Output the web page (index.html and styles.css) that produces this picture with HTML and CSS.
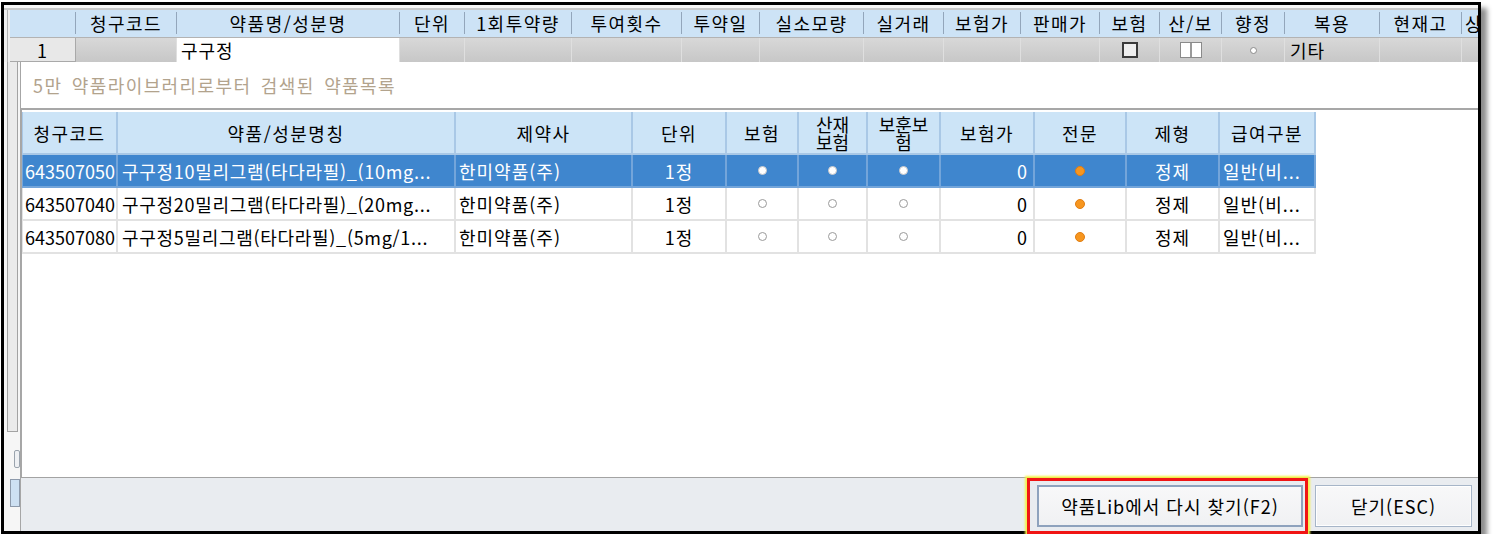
FILE: index.html
```html
<!DOCTYPE html>
<html lang="ko">
<head>
    <meta charset="UTF-8">
    <title>약품라이브러리 검색</title>
    <link rel="stylesheet" href="styles.css">
</head>
<body>
    <div class="window">
        <div class="topline"></div>

        <div class="top-grid">
            <div class="grid-head">
                <div class="gh"></div>
                <div class="gh">청구코드</div>
                <div class="gh">약품명/성분명</div>
                <div class="gh">단위</div>
                <div class="gh">1회투약량</div>
                <div class="gh">투여횟수</div>
                <div class="gh">투약일</div>
                <div class="gh">실소모량</div>
                <div class="gh">실거래</div>
                <div class="gh">보험가</div>
                <div class="gh">판매가</div>
                <div class="gh">보험</div>
                <div class="gh">산/보</div>
                <div class="gh">향정</div>
                <div class="gh">복용</div>
                <div class="gh">현재고</div>
                <div class="gh gh-left">상</div>
            </div>
            <div class="grid-row">
                <div class="gc gc-num">1</div>
                <div class="gc"></div>
                <div class="gc gc-edit">구구정</div>
                <div class="gc"></div>
                <div class="gc"></div>
                <div class="gc"></div>
                <div class="gc"></div>
                <div class="gc"></div>
                <div class="gc"></div>
                <div class="gc"></div>
                <div class="gc"></div>
                <div class="gc gc-mid"><span class="check"></span></div>
                <div class="gc gc-mid"><span class="dbl-box"></span></div>
                <div class="gc gc-mid"><span class="ring"></span></div>
                <div class="gc gc-text">기타</div>
                <div class="gc"></div>
                <div class="gc"></div>
            </div>
        </div>

        <div class="lower">
            <div class="side">
                <div class="side-track"></div>
                <div class="side-knob"></div>
                <div class="side-blue"></div>
            </div>

            <div class="dialog">
                <div class="dialog-title">5만 약품라이브러리로부터 검색된 약품목록</div>

                <div class="result-panel">
                    <div class="rg rg-head">
                        <div class="hc">청구코드</div>
                        <div class="hc">약품/성분명칭</div>
                        <div class="hc">제약사</div>
                        <div class="hc">단위</div>
                        <div class="hc">보험</div>
                        <div class="hc hc-two">산재<br>보험</div>
                        <div class="hc hc-two">보훈보<br>험</div>
                        <div class="hc">보험가</div>
                        <div class="hc">전문</div>
                        <div class="hc">제형</div>
                        <div class="hc">급여구분</div>
                    </div>

                    <div class="rg rg-row selected">
                        <div class="bc code">643507050</div>
                        <div class="bc name">구구정10밀리그램(타다라필)_(10mg...</div>
                        <div class="bc maker">한미약품(주)</div>
                        <div class="bc mid">1정</div>
                        <div class="bc mid"><span class="dot"></span></div>
                        <div class="bc mid"><span class="dot"></span></div>
                        <div class="bc mid"><span class="dot"></span></div>
                        <div class="bc num">0</div>
                        <div class="bc mid"><span class="dot dot-pro"></span></div>
                        <div class="bc mid">정제</div>
                        <div class="bc maker">일반(비...</div>
                    </div>

                    <div class="rg rg-row">
                        <div class="bc code">643507040</div>
                        <div class="bc name">구구정20밀리그램(타다라필)_(20mg...</div>
                        <div class="bc maker">한미약품(주)</div>
                        <div class="bc mid">1정</div>
                        <div class="bc mid"><span class="dot"></span></div>
                        <div class="bc mid"><span class="dot"></span></div>
                        <div class="bc mid"><span class="dot"></span></div>
                        <div class="bc num">0</div>
                        <div class="bc mid"><span class="dot dot-pro"></span></div>
                        <div class="bc mid">정제</div>
                        <div class="bc maker">일반(비...</div>
                    </div>

                    <div class="rg rg-row">
                        <div class="bc code">643507080</div>
                        <div class="bc name">구구정5밀리그램(타다라필)_(5mg/1...</div>
                        <div class="bc maker">한미약품(주)</div>
                        <div class="bc mid">1정</div>
                        <div class="bc mid"><span class="dot"></span></div>
                        <div class="bc mid"><span class="dot"></span></div>
                        <div class="bc mid"><span class="dot"></span></div>
                        <div class="bc num">0</div>
                        <div class="bc mid"><span class="dot dot-pro"></span></div>
                        <div class="bc mid">정제</div>
                        <div class="bc maker">일반(비...</div>
                    </div>
                </div>

                <div class="dialog-foot">
                    <div class="focus-ring">
                        <button class="btn btn-main">약품Lib에서 다시 찾기(F2)</button>
                    </div>
                    <button class="btn btn-close">닫기(ESC)</button>
                </div>
            </div>
        </div>
    </div>
</body>
</html>
```

FILE: styles.css
```css
body {
    margin: 0;
    background: #fff;
    font-family: "Noto Sans CJK KR", "Noto Sans", sans-serif;
    font-size: 18px;
    letter-spacing: 1px;
    color: #000;
}

.window {
    box-sizing: border-box;
    width: 1480px;
    height: 532px;
    margin: 2px 0 0 1px;
    border: 3px solid #000;
    box-shadow: 6px 6px 5px rgba(0, 0, 0, 0.45);
    background: #f0f0f0;
    display: flex;
    flex-direction: column;
}

.topline {
    flex: none;
    height: 3px;
    background: #f7f7f7;
    border-bottom: 2px solid #c9c9c9;
}

/* underlying prescription grid */
.top-grid {
    flex: none;
    overflow: hidden;
    border-left: 1px solid #b4b4b4;
    margin-left: 3px;
    padding-left: 2px;
}

.grid-head,
.grid-row {
    display: grid;
    grid-template-columns: 66px 101px 223px 65px 107px 110px 78px 104px 80px 77px 79px 60px 62px 63px 95px 82px 40px;
}

.grid-head {
    height: 27px;
    background: #cde3f6;
    letter-spacing: 1.5px;
}

.gh {
    box-sizing: border-box;
    margin: 2px 0 3px;
    border-right: 1px solid #93a6bb;
    display: flex;
    align-items: center;
    justify-content: center;
    line-height: 20px;
    white-space: nowrap;
}

.gh-left {
    justify-content: flex-start;
    padding-left: 3px;
    border-right: none;
}

.grid-row {
    height: 25px;
    background: linear-gradient(#d8d8d8, #c7c7c7);
    border-top: 1px solid #b3b3b3;
    box-sizing: border-box;
}

.gc {
    box-sizing: border-box;
    border-right: 1px solid #dfdfdf;
    display: flex;
    align-items: center;
    line-height: 20px;
}

.gc-num {
    justify-content: center;
    background: #e8e8e8;
    border-right: 1px solid #a9a9a9;
    border-bottom: 1px solid #a9a9a9;
}

.gc-edit {
    background: #fff;
    padding-left: 4px;
}

.gc-mid {
    justify-content: center;
}

.gc-text {
    padding-left: 5px;
}

.check {
    box-sizing: border-box;
    width: 16px;
    height: 16px;
    border: 2px solid #3b3b3b;
    background: #efefef;
}

.dbl-box {
    box-sizing: border-box;
    width: 22px;
    height: 16px;
    border: 1px solid #8a8a8a;
    background: linear-gradient(90deg, #fff 0 9px, #9a9a9a 9px 11px, #fff 11px);
}

.ring {
    box-sizing: border-box;
    width: 7px;
    height: 7px;
    border: 1px solid #8a8a8a;
    border-radius: 50%;
    background: #fff;
}

/* dialog */
.lower {
    flex: 1;
    display: flex;
    min-height: 0;
}

.side {
    flex: none;
    width: 16px;
    background: #f6f6f6;
    display: flex;
    flex-direction: column;
}

.side-track {
    height: 370px;
    margin-left: 3px;
    width: 11px;
    box-sizing: border-box;
    background: #ebebeb;
    border-left: 1px solid #a3a3a3;
    border-right: 1px solid #a3a3a3;
    border-bottom: 1px solid #a3a3a3;
}

.side-knob {
    margin: 18px 0 0 10px;
    width: 6px;
    height: 18px;
    box-sizing: border-box;
    border: 1px solid #9aa3ad;
    border-radius: 2px;
    background: #eef0f3;
}

.side-blue {
    margin: 11px 0 0 6px;
    width: 10px;
    height: 28px;
    box-sizing: border-box;
    border: 1px solid #8d9aab;
    background: #cde0f2;
}

.dialog {
    flex: 1;
    display: flex;
    flex-direction: column;
    background: #fff;
    border-left: 1px solid #a6a6a6;
}

.dialog-title {
    flex: none;
    height: 46px;
    line-height: 46px;
    padding-left: 12px;
    color: #b2a38d;
    letter-spacing: 1.4px;
    word-spacing: 3px;
}

.result-panel {
    flex: 1;
    border-top: 2px solid #a7a7a7;
    border-left: 1px solid #a7a7a7;
    padding-top: 2px;
    background: #fff;
}

.rg {
    display: grid;
    grid-template-columns: 96px 338px 177px 94px 72px 69px 73px 94px 92px 93px 96px;
    width: max-content;
}

.rg-head {
    height: 43px;
    background: #cce4f7;
}

.hc {
    box-sizing: border-box;
    border-right: 2px solid #a9c8e6;
    border-bottom: 2px solid #a9c8e6;
    display: flex;
    align-items: center;
    justify-content: center;
    text-align: center;
    line-height: 20px;
    letter-spacing: 1.5px;
}

.hc:first-child,
.bc:first-child {
    border-left: 1px solid #a9c8e6;
}

.hc-two {
    line-height: 18px;
    letter-spacing: 0;
}

.rg-row {
    height: 33px;
}

.bc {
    box-sizing: border-box;
    border-right: 2px solid #e2e2e2;
    border-bottom: 2px solid #e2e2e2;
    display: flex;
    align-items: center;
    line-height: 20px;
    white-space: nowrap;
    overflow: hidden;
}

.bc:first-child {
    border-left-color: #e2e2e2;
}

.code {
    padding-left: 2px;
    letter-spacing: 0;
}

.name {
    padding-left: 4px;
    letter-spacing: 0.7px;
}

.maker {
    padding-left: 3px;
}

.mid {
    justify-content: center;
}

.num {
    justify-content: flex-end;
    padding-right: 5px;
}

.selected {
    background: #3f86ce;
    color: #fff;
}

.selected .bc {
    border-color: #73a5da;
}

.dot {
    box-sizing: border-box;
    width: 9px;
    height: 9px;
    border-radius: 50%;
    border: 1px solid #9a9a9a;
    background: #fff;
}

.selected .dot {
    border-color: #c9c9c9;
    background: #fff;
}

.dot-pro,
.selected .dot-pro {
    width: 10px;
    height: 10px;
    border-color: #e07d12;
    background: #f7961f;
}

.dialog-foot {
    flex: none;
    height: 54px;
    box-sizing: border-box;
    border-top: 1px solid #a3a3a3;
    background: #e9ecf0;
    display: flex;
    justify-content: flex-end;
    align-items: flex-start;
    padding-right: 6px;
}

.focus-ring {
    box-sizing: border-box;
    height: 56px;
    padding: 4px 2px 4px 7px;
    border: 3px solid #f01414;
    box-shadow: 0 0 2px 2px #f4f148;
}

.btn {
    box-sizing: border-box;
    height: 42px;
    font-family: inherit;
    font-size: 18px;
    letter-spacing: 1px;
    color: #000;
    background: linear-gradient(#f8f8f9, #f0f1f3);
    cursor: pointer;
}

.btn-main {
    width: 266px;
    border: 2px solid #8ea2bd;
}

.btn-close {
    width: 157px;
    margin: 7px 0 0 7px;
    border: 1px solid #a6b5c8;
    box-shadow: inset 0 0 0 1px #fff;
}
```
